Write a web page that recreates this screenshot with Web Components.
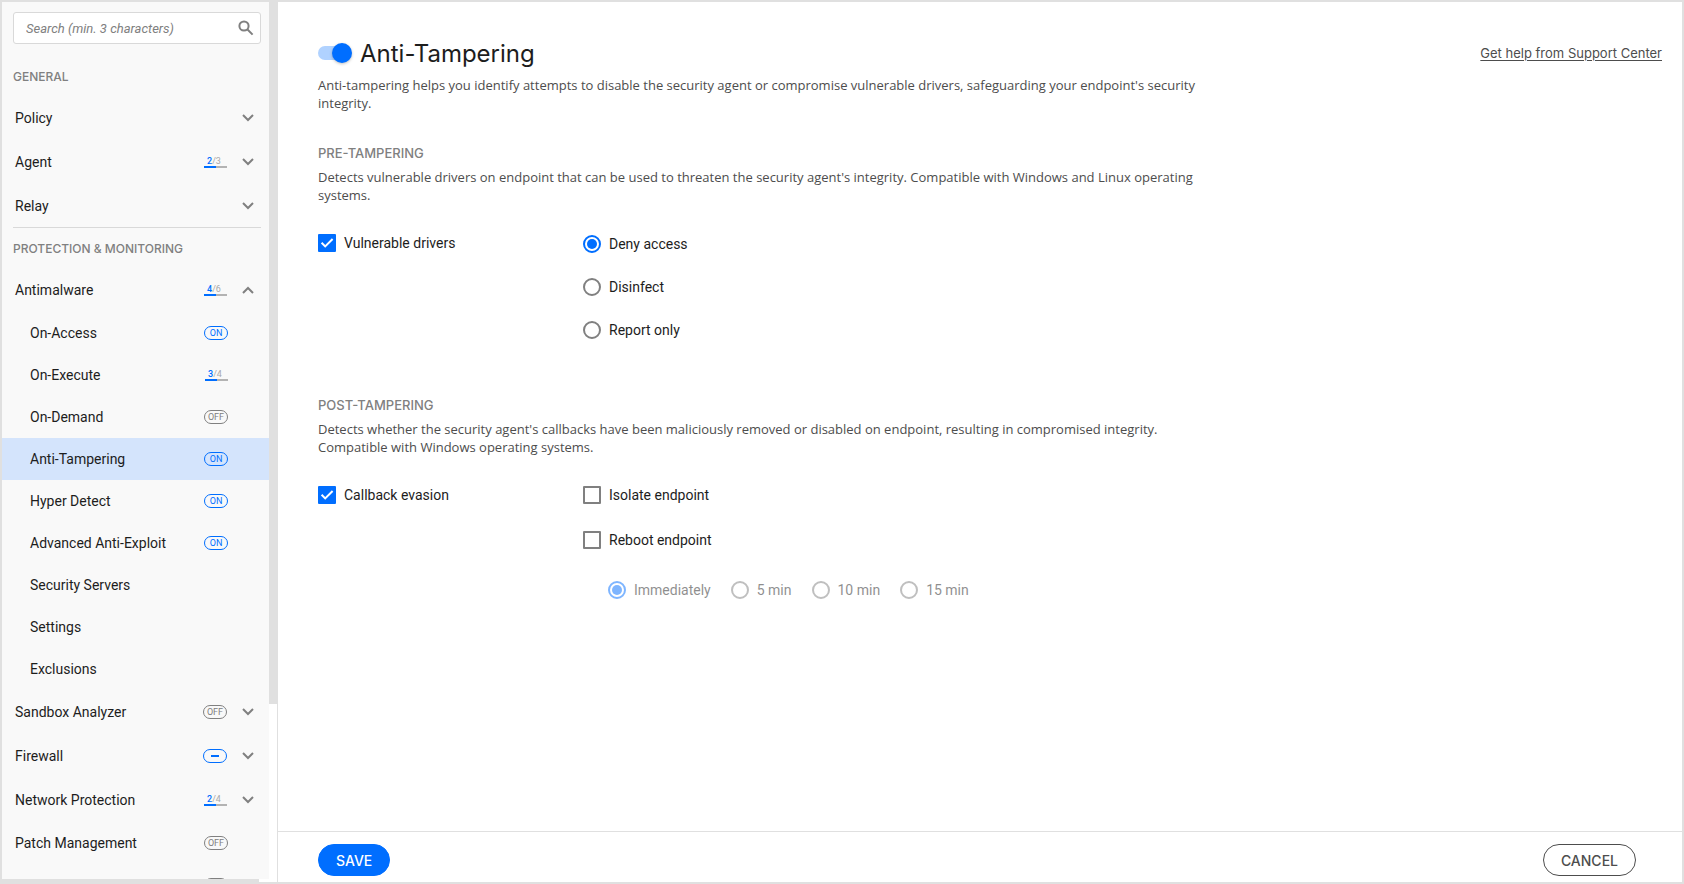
<!DOCTYPE html>
<html lang="en">
<head>
  <meta charset="UTF-8">
  <meta name="viewport" content="width=device-width, initial-scale=1.0">
  <title>Anti-Tampering</title>
  <style>
    :root {
      --blue: #006eff;
      --gray: #808080;
      --line: #e0e0e0;
      --ink: #1d1d1d;
      --text: #4d4d4d;
      --heading-font: Inter, sans-serif;
      --text-font: "Open Sans", sans-serif;
      --label-font: Roboto, sans-serif;
    }

    body {
      margin: 0;
      font-family: var(--label-font);
      font-size: 14px;
      color: var(--ink);
      background-color: white;
    }
  </style>
</head>
<body>
  <app-shell>
    <side-bar slot="sidebar">
      <nav-heading>General</nav-heading>
      <nav-item expand="closed">Policy</nav-item>
      <nav-item expand="closed" badge="2/3">Agent</nav-item>
      <nav-item expand="closed" divider>Relay</nav-item>
      <nav-heading>Protection &amp; Monitoring</nav-heading>
      <nav-item expand="open" badge="4/6">Antimalware</nav-item>
      <nav-item sub badge="on">On-Access</nav-item>
      <nav-item sub badge="3/4">On-Execute</nav-item>
      <nav-item sub badge="off">On-Demand</nav-item>
      <nav-item sub badge="on" active>Anti-Tampering</nav-item>
      <nav-item sub badge="on">Hyper Detect</nav-item>
      <nav-item sub badge="on">Advanced Anti-Exploit</nav-item>
      <nav-item sub>Security Servers</nav-item>
      <nav-item sub>Settings</nav-item>
      <nav-item sub>Exclusions</nav-item>
      <nav-item expand="closed" badge="off">Sandbox Analyzer</nav-item>
      <nav-item expand="closed" badge="partial">Firewall</nav-item>
      <nav-item expand="closed" badge="2/4">Network Protection</nav-item>
      <nav-item badge="off">Patch Management</nav-item>
      <nav-item badge="empty"></nav-item>
    </side-bar>

    <page-header heading="Anti-Tampering">
      Anti-tampering helps you identify attempts to disable the security agent or compromise vulnerable drivers, safeguarding your endpoint's security integrity.
    </page-header>

    <setting-section heading="Pre-tampering">
      <span slot="description">Detects vulnerable drivers on endpoint that can be used to threaten the security agent's integrity. Compatible with Windows and Linux operating systems.</span>
      <check-option slot="feature" checked>Vulnerable drivers</check-option>
      <radio-set name="action" options="Deny access|Disinfect|Report only"></radio-set>
    </setting-section>

    <setting-section heading="Post-tampering">
      <span slot="description">Detects whether the security agent's callbacks have been maliciously removed or disabled on endpoint, resulting in compromised integrity. Compatible with Windows operating systems.</span>
      <check-option slot="feature" checked>Callback evasion</check-option>
      <check-option>Isolate endpoint</check-option>
      <check-option>Reboot endpoint</check-option>
      <radio-set name="delay" options="Immediately|5 min|10 min|15 min" inline disabled></radio-set>
    </setting-section>

    <pill-button slot="footer" primary>SAVE</pill-button>
    <pill-button slot="footer">CANCEL</pill-button>
  </app-shell>

  <script>
    class BaseElement extends HTMLElement {
      constructor() {
        super();
        this.shadowDOM = this.attachShadow({ mode: 'open' });
      }

      connectedCallback() {
        this.render();
      }
    }

    class AppShell extends BaseElement {
      render() {
        this.shadowDOM.innerHTML = `
          <style>
            :host {
              display: flex;
              box-sizing: border-box;
              height: 100vh;
              border: 2px solid var(--line);
            }

            .page {
              flex: 1;
              min-width: 0;
              display: flex;
              flex-direction: column;
            }

            main {
              flex: 1;
              min-height: 0;
              overflow: hidden;
              padding: 36px 20px 0 40px;
            }

            footer {
              display: flex;
              justify-content: space-between;
              padding: 12px 46px 6px 40px;
              border-top: 1px solid var(--line);
            }
          </style>

          <slot name="sidebar"></slot>
          <div class="page">
            <main><slot></slot></main>
            <footer><slot name="footer"></slot></footer>
          </div>`;
      }
    }

    class SideBar extends BaseElement {
      render() {
        this.shadowDOM.innerHTML = `
          <style>
            :host {
              display: grid;
              grid-template-columns: 1fr 8px;
              grid-template-rows: minmax(0, 1fr) 3px;
              box-sizing: border-box;
              width: 276px;
              flex: none;
              border-right: 1px solid var(--line);
            }

            .list {
              overflow: hidden;
              background-color: #f9f9f9;
            }

            .search {
              display: flex;
              align-items: center;
              box-sizing: border-box;
              height: 32px;
              margin: 10px 8px 12px 11px;
              padding: 0 6px 0 12px;
              border: 1px solid #d9d9d9;
              border-radius: 3px;
              background-color: white;
            }

            .search input {
              flex: 1;
              min-width: 0;
              padding: 0;
              border: 0;
              outline: 0;
              font: italic 13px var(--label-font);
            }

            .search input::placeholder {
              color: var(--gray);
            }

            .thumb {
              width: 8px;
              height: 80%;
              background-color: var(--line);
            }

            .thumb-x {
              width: 257px;
              background-color: var(--line);
            }
          </style>

          <nav class="list">
            <div class="search">
              <input type="search" placeholder="Search (min. 3 characters)" aria-label="Search">
              <svg width="16" height="16" viewBox="0 0 16 16" fill="none" stroke="#808080" stroke-width="2">
                <circle cx="6" cy="6" r="4.6"/>
                <path d="M9.5 9.5L14.6 14.6"/>
              </svg>
            </div>
            <slot></slot>
          </nav>
          <div class="thumb"></div>
          <div class="thumb-x"></div>`;
      }
    }

    class NavHeading extends BaseElement {
      render() {
        this.shadowDOM.innerHTML = `
          <style>
            :host {
              display: flex;
              align-items: center;
              height: 40px;
              padding-left: 11px;
              color: var(--gray);
              font: 500 12px var(--heading-font);
              text-transform: uppercase;
            }
          </style>

          <slot></slot>`;
      }
    }

    class StateBadge extends BaseElement {
      render() {
        const value = this.getAttribute('value');
        const [done, total] = value.split('/');
        let content = `<span class="pill ${value}">${value === 'empty' ? '' : value}</span>`;

        if (value === 'partial') {
          content = '<span class="pill on"><i></i></span>';
        }
        if (total) {
          content = `<span class="count"><span><b>${done}</b>/${total}</span><i></i></span>`;
        }

        this.shadowDOM.innerHTML = `
          <style>
            :host {
              display: flex;
              justify-content: flex-end;
              width: 24px;
              font: 9px/10px var(--label-font);
            }

            .pill {
              display: flex;
              align-items: center;
              justify-content: center;
              box-sizing: border-box;
              width: 24px;
              height: 14px;
              border: 1px solid var(--gray);
              border-radius: 7px;
              color: var(--gray);
              text-transform: uppercase;
            }

            .pill.on {
              border-color: var(--blue);
              color: var(--blue);
            }

            .pill i {
              width: 8px;
              height: 2px;
              background-color: var(--blue);
            }

            .count {
              display: grid;
              width: 23px;
              color: #a8a8a8;
            }

            .count span {
              padding-left: 3px;
            }

            .count b {
              font-weight: 500;
              color: var(--blue);
            }

            .count i {
              height: 2px;
              background: linear-gradient(to right, var(--blue) 52%, #b3b3b3 52%);
            }
          </style>

          ${content}`;
      }
    }

    class NavItem extends BaseElement {
      render() {
        const badge = this.getAttribute('badge');
        const expand = this.getAttribute('expand');
        const path = expand === 'open' ? 'M1 7L6 2L11 7' : 'M1 1L6 6L11 1';
        const content = `
          <span class="label"><slot></slot></span>
          ${badge ? `<state-badge value="${badge}"></state-badge>` : ''}
          ${expand ? `<svg width="12" height="8" viewBox="0 0 12 8" fill="none" stroke="#808080" stroke-width="2"><path d="${path}"/></svg>` : ''}`;

        this.shadowDOM.innerHTML = `
          <style>
            :host {
              display: block;
            }

            .row {
              display: flex;
              align-items: center;
              gap: 15px;
              box-sizing: border-box;
              width: 100%;
              height: 42px;
              padding: 0 41px 0 13px;
              border: 0;
              background: none;
              color: inherit;
              font: 14px var(--label-font);
              text-align: left;
              text-decoration: none;
              cursor: pointer;
            }

            button.row {
              height: 44px;
              padding-right: 15px;
            }

            :host([sub]) .row {
              padding-left: 28px;
            }

            :host([active]) .row {
              background-color: #d4e4fc;
            }

            .label {
              flex: 1;
            }

            hr {
              height: 1px;
              margin: -1px 8px 0 11px;
              border: 0;
              background-color: #d9d9d9;
            }
          </style>

          ${expand
            ? `<button type="button" class="row" aria-expanded="${expand === 'open'}">${content}</button>`
            : `<a href="#" class="row">${content}</a>`}
          ${this.hasAttribute('divider') ? '<hr>' : ''}`;
      }
    }

    class ToggleSwitch extends BaseElement {
      render() {
        this.shadowDOM.innerHTML = `
          <style>
            :host {
              display: flex;
            }

            input {
              appearance: none;
              display: flex;
              align-items: center;
              justify-content: flex-end;
              position: relative;
              width: 34px;
              height: 20px;
              margin: 0;
              cursor: pointer;
            }

            /* track */
            input::after {
              content: '';
              position: absolute;
              inset: 3px 4px 3px 0;
              z-index: -1;
              border-radius: 7px;
              background-color: #b0d2ff;
            }

            /* knob */
            input::before {
              content: '';
              width: 20px;
              height: 20px;
              border-radius: 50%;
              background-color: var(--blue);
              box-shadow: 0 1px 3px rgba(0, 0, 0, .25);
            }
          </style>

          <input type="checkbox" role="switch" aria-label="${this.getAttribute('label')}" checked>`;
      }
    }

    class PageHeader extends BaseElement {
      render() {
        const heading = this.getAttribute('heading');

        this.shadowDOM.innerHTML = `
          <style>
            :host {
              display: block;
              font-family: var(--heading-font);
            }

            .top {
              display: flex;
              align-items: center;
              gap: 8px;
              height: 30px;
            }

            h1 {
              flex: 1;
              margin: 0;
              font-size: 24px;
              font-weight: 400;
            }

            a {
              font-size: 13px;
              color: var(--text);
              text-underline-offset: 2px;
            }

            p {
              max-width: 900px;
              margin: 8px 0 0;
              color: var(--text);
              font: 13px/18px var(--text-font);
            }
          </style>

          <div class="top">
            <toggle-switch label="${heading}"></toggle-switch>
            <h1>${heading}</h1>
            <a href="#">Get help from Support Center</a>
          </div>
          <p><slot></slot></p>`;
      }
    }

    class SettingSection extends BaseElement {
      render() {
        this.shadowDOM.innerHTML = `
          <style>
            :host {
              display: block;
              padding-top: 32px;
              min-height: 220px;
            }

            h2 {
              margin: 0 0 6px;
              color: var(--gray);
              font: 500 13px/18px var(--heading-font);
              text-transform: uppercase;
            }

            p {
              max-width: 900px;
              margin: 0 0 30px;
              color: var(--text);
              font: 13px/18px var(--text-font);
            }

            .options {
              display: grid;
              grid-template-columns: 265px 1fr;
            }

            .choices {
              display: grid;
              gap: 27px;
            }
          </style>

          <h2>${this.getAttribute('heading')}</h2>
          <p><slot name="description"></slot></p>
          <div class="options">
            <slot name="feature"></slot>
            <div class="choices"><slot></slot></div>
          </div>`;
      }
    }

    class CheckOption extends BaseElement {
      render() {
        this.shadowDOM.innerHTML = `
          <style>
            :host {
              display: block;
            }

            label {
              display: flex;
              gap: 8px;
              width: fit-content;
              line-height: 18px;
              cursor: pointer;
            }

            .box {
              display: grid;
            }

            input, svg {
              grid-area: 1 / 1;
            }

            input {
              appearance: none;
              box-sizing: border-box;
              width: 18px;
              height: 18px;
              margin: 0;
              border: 2px solid var(--gray);
              border-radius: 1px;
            }

            input:checked {
              border-color: var(--blue);
              background-color: var(--blue);
            }

            input:not(:checked) + svg {
              display: none;
            }

            svg {
              pointer-events: none;
            }
          </style>

          <label>
            <span class="box">
              <input type="checkbox" ${this.hasAttribute('checked') ? 'checked' : ''}>
              <svg width="18" height="18" viewBox="0 0 18 18" fill="none" stroke="white" stroke-width="2">
                <path d="M3.6 8.8L7.2 12.4L14.6 5"/>
              </svg>
            </span>
            <slot></slot>
          </label>`;
      }
    }

    class RadioSet extends BaseElement {
      render() {
        const name = this.getAttribute('name');
        const disabled = this.hasAttribute('disabled') ? 'disabled' : '';
        const options = this.getAttribute('options').split('|');

        this.shadowDOM.innerHTML = `
          <style>
            :host {
              display: grid;
              gap: 25px;
              padding-top: 1px;
            }

            :host([inline]) {
              display: flex;
              gap: 20px;
              padding: 5px 0 0 25px;
            }

            :host([disabled]) {
              opacity: .5;
            }

            label {
              display: flex;
              gap: 8px;
              line-height: 18px;
            }

            input {
              appearance: none;
              box-sizing: border-box;
              width: 18px;
              height: 18px;
              margin: 0;
              border: 2px solid var(--gray);
              border-radius: 50%;
            }

            input:checked {
              padding: 2px;
              border-color: var(--blue);
              background: var(--blue) content-box;
            }
          </style>

          ${options.map((option, i) => `
            <label>
              <input type="radio" name="${name}" ${i === 0 ? 'checked' : ''} ${disabled}>
              ${option}
            </label>`).join('')}`;
      }
    }

    class PillButton extends BaseElement {
      render() {
        this.shadowDOM.innerHTML = `
          <style>
            :host {
              display: block;
            }

            button {
              height: 32px;
              padding: 0 17px;
              border: 1px solid var(--text);
              border-radius: 16px;
              background-color: white;
              color: var(--text);
              font: 500 14px var(--heading-font);
              cursor: pointer;
            }

            :host([primary]) button {
              border-color: var(--blue);
              background-color: var(--blue);
              color: white;
            }
          </style>

          <button type="button"><slot></slot></button>`;
      }
    }

    customElements.define('app-shell', AppShell);
    customElements.define('side-bar', SideBar);
    customElements.define('nav-heading', NavHeading);
    customElements.define('state-badge', StateBadge);
    customElements.define('nav-item', NavItem);
    customElements.define('toggle-switch', ToggleSwitch);
    customElements.define('page-header', PageHeader);
    customElements.define('setting-section', SettingSection);
    customElements.define('check-option', CheckOption);
    customElements.define('radio-set', RadioSet);
    customElements.define('pill-button', PillButton);
  </script>
</body>
</html>
